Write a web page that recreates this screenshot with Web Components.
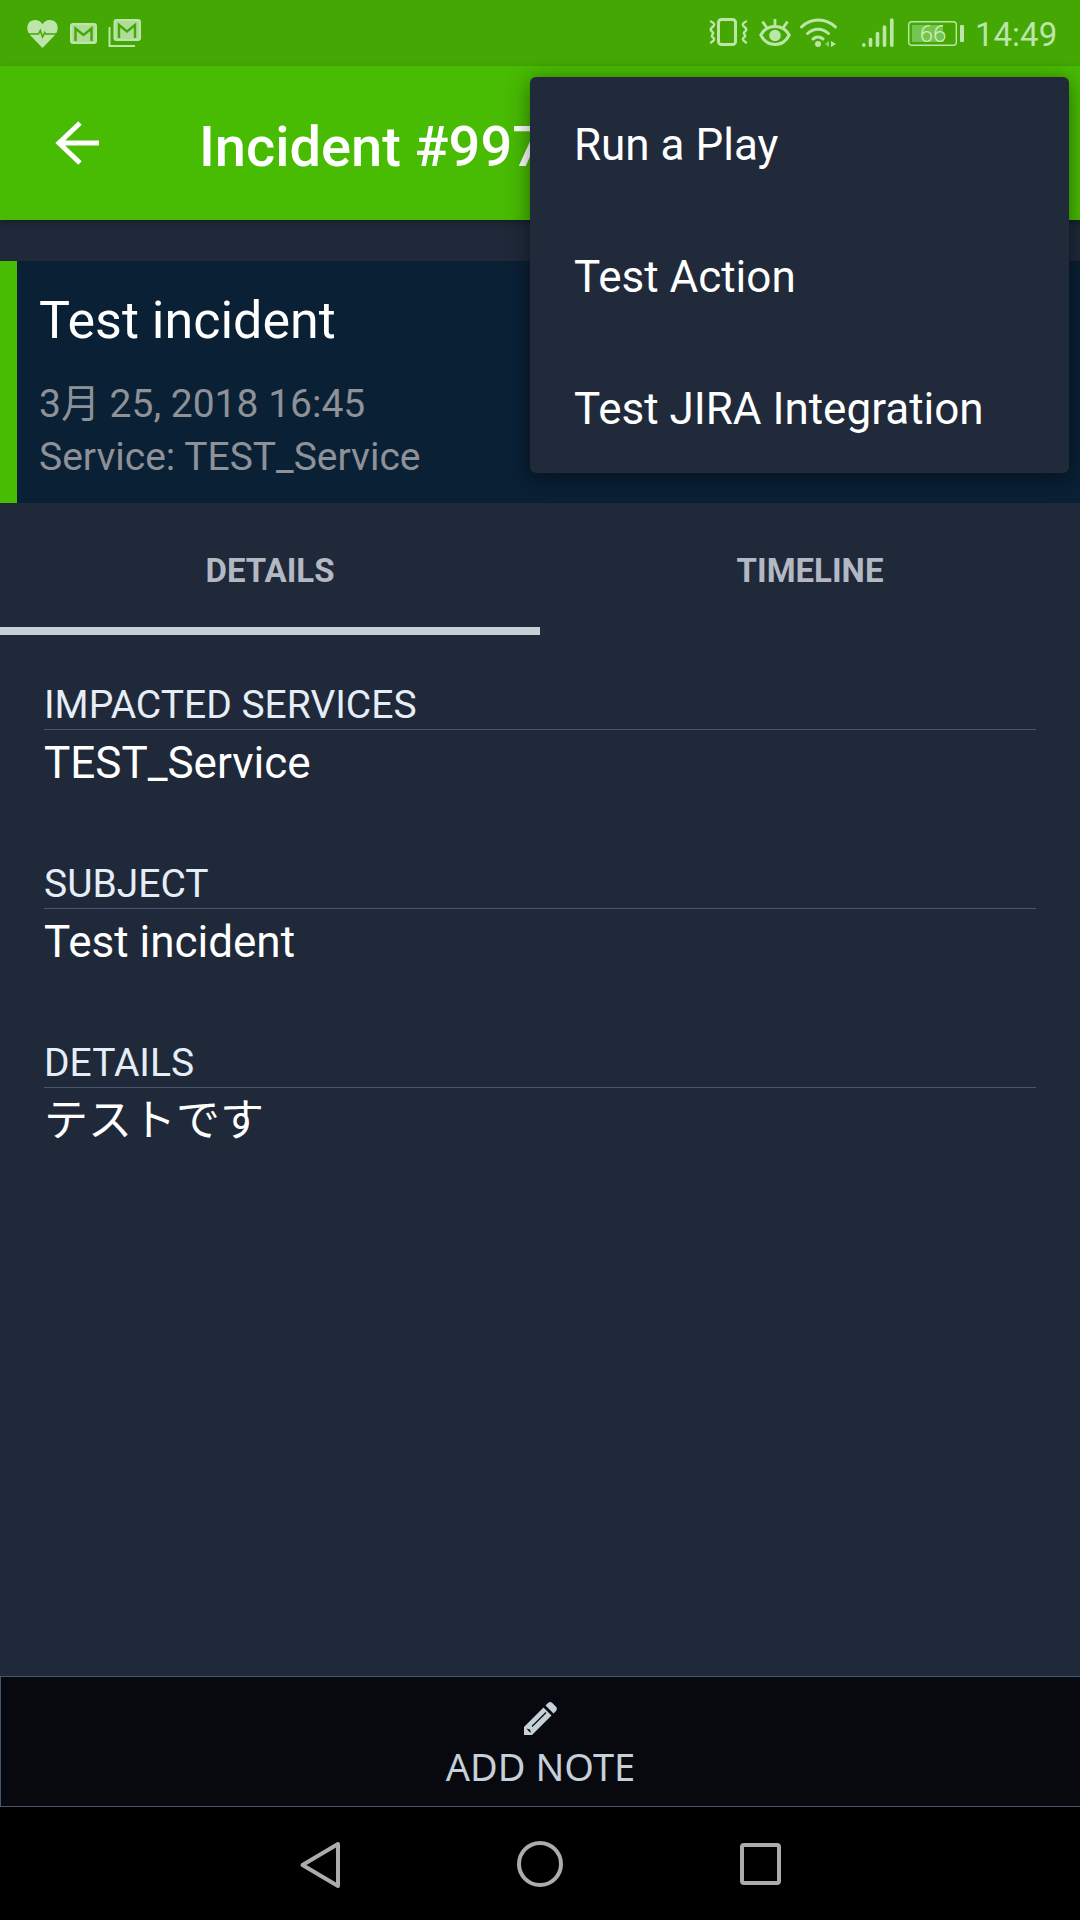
<!DOCTYPE html>
<html lang="en">
<head>
<meta charset="utf-8">
<title>Incident</title>
<style>
html,body{margin:0;padding:0;background:#202a3a;font-family:Roboto,"Noto Sans CJK JP",sans-serif}
</style>
</head>
<body>
<template id="t-screen"><style>
:host{display:flex;flex-direction:column;position:relative;width:1080px;height:1920px;overflow:hidden;background:#1f2939}
main{flex:1;display:flex;flex-direction:column;padding:47px 44px 0}
</style><slot name="top"></slot><main><slot></slot></main><slot name="bottom"></slot></template>

<template id="t-status"><style>
:host{display:flex;align-items:flex-start;justify-content:space-between;height:66px;background:#44a703;color:#bce5a9;box-sizing:border-box;padding:0 23px 0 27px}
.g{display:flex;align-items:flex-start}
svg{display:block;overflow:visible}
.time{font:400 33px/1 Roboto,sans-serif;margin:18px 0 0 11px;width:82px;white-space:nowrap}
</style>
<div class="g">
<svg width="31" height="28" viewBox="0 0 31 28" style="margin:20px 12px 0 0"><path fill="#bce5a9" d="M15.500 28 3 15C-2 9 0 0 8 0c3.200 0 6 1.500 7.500 4.200C17 1.500 19.800 0 23 0c8 0 10 9 5 15Z"/><path fill="none" stroke="#44a703" stroke-width="1.500" d="M0 14h11.500l1.800-3.500 2.200 6.500 2.200-4.500 1 1.500H31"/></svg>
<svg width="27" height="21" viewBox="0 0 27 21" style="margin:23px 11px 0 0"><rect x="1" y="1" width="25" height="19" rx="2" fill="#aedd98" stroke="#bce5a9" stroke-width="2"/><path fill="none" stroke="#44a703" stroke-width="2.400" d="M5.500 18V5.500l8 6.500 8-6.500V18"/></svg>
<svg width="33" height="28" viewBox="0 0 33 28" style="margin:19px 0 0 0"><path fill="none" stroke="#bce5a9" stroke-width="2" d="M1.500 8v19H27"/><rect x="6.500" y="1" width="25.500" height="20" rx="2" fill="#aedd98" stroke="#bce5a9" stroke-width="2"/><path fill="none" stroke="#44a703" stroke-width="2.400" d="M11 19V6l8 6.500L27 6v13"/></svg>
</div>
<div class="g">
<svg width="39" height="28" viewBox="0 0 39 28" style="margin:18px 11px 0 0"><rect x="9.500" y="1.500" width="17" height="25" rx="3" fill="none" stroke="#bce5a9" stroke-width="3"/><path fill="none" stroke="#bce5a9" stroke-width="2.400" stroke-linecap="round" stroke-linejoin="round" d="M2 3.500c4 2 4 3.500 1.500 5.500s-2.500 3 0 5-2.500 3 0 5 2.500 3-1.500 5.500M37 3.500c-4 2-4 3.500-1.500 5.500s2.500 3 0 5 2.500 3 0 5-2.500 3 1.500 5.500"/></svg>
<svg width="32" height="27" viewBox="0 0 32 27" style="margin:19px 9px 0 0"><path fill="none" stroke="#bce5a9" stroke-width="3" d="M1.800 16C5 10 10 7.500 16 7.500S27 10 30.200 16C27 22.500 22 25.500 16 25.500S5 22.500 1.800 16Z"/><circle cx="16" cy="16.500" r="5.800" fill="#bce5a9"/><path fill="none" stroke="#bce5a9" stroke-width="2.800" d="M16 0v6.500M3.500 2.500l4.500 6.500M28.500 2.500l-4.500 6.500"/></svg>
<svg width="37" height="29" viewBox="0 0 37 29" style="margin:18px 25px 0 0"><g fill="none" stroke="#bce5a9" stroke-width="3" stroke-linecap="round"><path d="M1.500 9C10.500 -.5 26 -.5 35.500 9"/><path d="M7.500 15.500c6-5.800 15-5.800 21 0"/><path d="M13 21c3-2.600 7-2.600 10 0"/></g><circle cx="18" cy="26" r="3" fill="#bce5a9"/><path fill="#8fd06f" d="M29 23v6l-4-3z"/><path fill="#bce5a9" d="M31 23v6l5-3z"/></svg>
<svg width="32" height="29" viewBox="0 0 32 29" style="margin:18px 14px 0 0"><g stroke="#bce5a9" stroke-width="3.600" stroke-linecap="round"><path d="M1.800 26.800v.4M8.500 21.500v5.700M15.500 15.500v11.700M22.500 9v18.200M29.800 2v25.200"/></g></svg>
<svg width="56" height="25" viewBox="0 0 56 25" style="margin:21px 0 0 0"><rect x=".7" y=".7" width="47.600" height="23.600" rx="3" fill="none" stroke="#bce5a9" stroke-width="1.400"/><rect x="4" y="4" width="31" height="17" fill="#74c54b"/><text x="25" y="20.500" text-anchor="middle" font-family="Roboto,sans-serif" font-size="24" font-weight="300" fill="#cfedc0">66</text><rect x="52" y="4" width="4" height="17" rx="1" fill="#bce5a9"/></svg>
<span class="time">14:49</span>
</div></template>

<template id="t-appbar"><style>
:host{display:flex;align-items:center;height:154px;background:#48bb03;box-shadow:0 3px 6px rgba(0,0,0,.25);position:relative;box-sizing:border-box;padding-left:55px}
svg{display:block;margin-right:100px;flex:none}
h1{margin:0;padding-top:7px;font:500 56px/60px Roboto,sans-serif;color:#fff;white-space:nowrap}
</style>
<svg width="44" height="44" viewBox="0 0 44 44"><path fill="none" stroke="#fff" stroke-width="5" d="M44 22H4M25 2 4 22l21 20"/></svg>
<h1><slot></slot></h1></template>

<template id="t-menu"><style>
:host{display:block;position:absolute;left:530px;top:77px;width:539px;background:#202a3a;border-radius:6px;box-shadow:0 8px 28px rgba(0,0,0,.3),0 0 14px rgba(0,0,0,.2);z-index:5}
</style><slot></slot></template>

<template id="t-item"><style>
:host{display:flex;align-items:center;height:132px;padding:3px 0 0 44px;box-sizing:border-box;font:400 44px/1 Roboto,sans-serif;color:#fff;white-space:nowrap}
</style><slot></slot></template>

<template id="t-card"><style>
:host{display:block;height:242px;margin-top:41px;box-sizing:border-box;background:#0a2035;border-left:17px solid #48bb03;padding:30px 0 0 22px}
.t{font:400 52px/60px Roboto,"Noto Sans CJK JP",sans-serif;color:#fff}
.m{font:400 39px/53px Roboto,"Noto Sans CJK JP",sans-serif;color:#8e9298;margin-top:27px}
</style><div class="t"><slot name="title"></slot></div><div class="m"><slot></slot></div></template>

<template id="t-tabs"><style>
:host{display:grid;grid-template-columns:1fr 1fr;height:132px}
</style><slot></slot></template>

<template id="t-tab"><style>
:host{display:flex;align-items:center;justify-content:center;box-sizing:border-box;height:132px;padding-top:11px;border-bottom:8px solid transparent;font:700 33px/1 Roboto,sans-serif;color:#b3b8c2}
:host([active]){border-bottom-color:#c5d0d6}
</style><slot></slot></template>

<template id="t-field"><style>
:host{display:block;margin-bottom:65px}
.l{font:400 39px/47px Roboto,sans-serif;color:#e5edf7;border-bottom:1px solid #46566e;white-space:nowrap}
.v{font:400 44px/66px Roboto,"Noto Sans CJK JP",sans-serif;color:#fff;white-space:nowrap}
</style><div class="l"><slot name="label"></slot></div><div class="v"><slot></slot></div></template>

<template id="t-note"><style>
:host{display:flex;flex-direction:column;align-items:center;box-sizing:border-box;height:131px;background:#08090e;border:1px solid #46566e;border-right:0;padding-top:25px;color:#c5d0d9}
svg{display:block}
span{font:400 38px/46px "Noto Sans",sans-serif;margin-top:8px;white-space:nowrap}
</style>
<svg width="33" height="33" viewBox="0 0 33 33"><path fill="#c5d0d9" d="M0 33v-8L19.500 5.500l8 8L8 33Z"/><path fill="#c5d0d9" d="M21.500 3.500 24 1c1.300-1.200 3-1.200 4.300 0L32 4.700c1.200 1.300 1.200 3 0 4.300l-2.500 2.500Z"/><path fill="none" stroke="#08090e" stroke-width="1.200" d="M8 24.500 22 10.500"/><path fill="#08090e" d="M2.500 26.500 6 27.500 7 31 4.500 29Z"/></svg>
<span><slot></slot></span></template>

<template id="t-nav"><style>
:host{display:block;height:113px;background:#000;position:relative}
svg{display:block;position:absolute;left:0;top:0}
</style>
<svg width="1080" height="113" viewBox="0 0 1080 113"><g fill="none" stroke="#acacac" stroke-width="4" stroke-linejoin="round"><path d="M338 37v42L302.500 58Z"/><circle cx="540" cy="57" r="21"/><rect x="742" y="38" width="37" height="38" rx="2"/></g></svg></template>

<app-screen>
  <status-bar slot="top"></status-bar>
  <app-bar slot="top">Incident #997</app-bar>
  <overflow-menu slot="top">
    <menu-item>Run a Play</menu-item>
    <menu-item>Test Action</menu-item>
    <menu-item>Test JIRA Integration</menu-item>
  </overflow-menu>
  <incident-card slot="top"><span slot="title">Test incident</span><span lang="ja">3月 25, 2018 16:45</span><br>Service: TEST_Service</incident-card>
  <tab-strip slot="top"><tab-item active>DETAILS</tab-item><tab-item>TIMELINE</tab-item></tab-strip>
  <detail-field><span slot="label">IMPACTED SERVICES</span>TEST_Service</detail-field>
  <detail-field><span slot="label">SUBJECT</span>Test incident</detail-field>
  <detail-field><span slot="label">DETAILS</span><span lang="ja">テストです</span></detail-field>
  <add-note slot="bottom">ADD NOTE</add-note>
  <nav-bar slot="bottom"></nav-bar>
</app-screen>
<script>
const map={'app-screen':'t-screen','status-bar':'t-status','app-bar':'t-appbar','overflow-menu':'t-menu','menu-item':'t-item','incident-card':'t-card','tab-strip':'t-tabs','tab-item':'t-tab','detail-field':'t-field','add-note':'t-note','nav-bar':'t-nav'};
for(const [name,id] of Object.entries(map)){
  customElements.define(name,class extends HTMLElement{
    constructor(){super();this.attachShadow({mode:'open'}).appendChild(document.getElementById(id).content.cloneNode(true));}
  });
}
</script>
</body>
</html>
